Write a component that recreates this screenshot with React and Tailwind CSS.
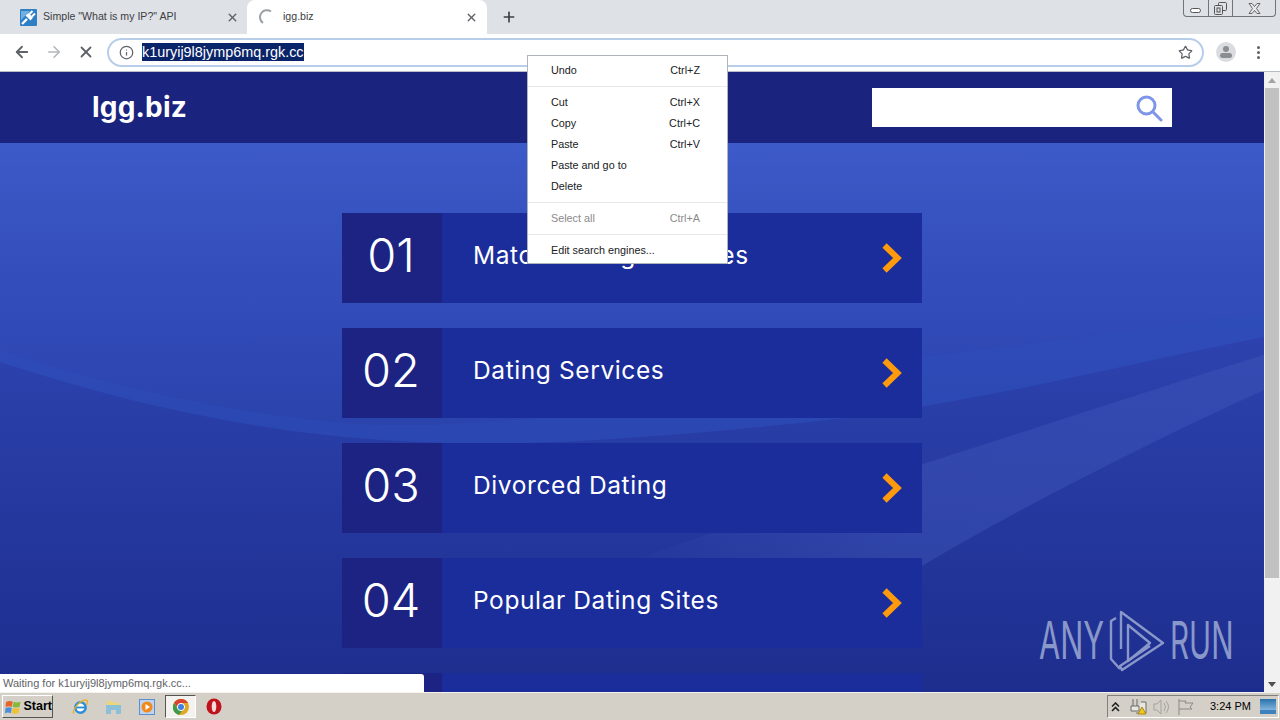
import { ArrowLeft, ArrowRight, X, Plus, Info, Star } from "lucide-react";

const ui = "font-['Liberation_Sans',Arial,sans-serif]";
const rows = [
  ["01", "Matchmaking Services"],
  ["02", "Dating Services"],
  ["03", "Divorced Dating"],
  ["04", "Popular Dating Sites"],
  ["", ""],
];
const menu = [
  [["Undo", "Ctrl+Z"]],
  [["Cut", "Ctrl+X"], ["Copy", "Ctrl+C"], ["Paste", "Ctrl+V"], ["Paste and go to", ""], ["Delete", ""]],
  [["Select all", "Ctrl+A", true]],
  [["Edit search engines...", ""]],
];

function Favicon() {
  return (
    <svg width="17" height="17" viewBox="0 0 17 17" className="shrink-0">
      <rect width="17" height="17" rx="1" fill="#2f7fc4" />
      <path d="M1 2 H10 L1 11 Z" fill="#6fb0e4" />
      <path d="M2 15 L7 10" stroke="#fff" strokeWidth="2.4" />
      <path d="M5.5 6.5 L10.5 11.5 L13 8.5 L8.5 4 Z" fill="#fff" />
      <path d="M9.5 5 L12.5 2 M12 7.5 L15 4.5" stroke="#fff" strokeWidth="2" />
    </svg>
  );
}

function Tab({ active, icon, title }) {
  return (
    <div className={`relative flex h-[34px] items-center ${active ? "w-[240px] rounded-t-lg bg-white" : "w-[247px]"}`}>
      <div className={`flex items-center ${active ? "ml-[11px] gap-[9px]" : "ml-[20px] gap-[6px]"}`}>
        {icon}
        <span className={`${ui} text-[10.6px] text-[#3c4043]`}>{title}</span>
      </div>
      <X size={13} strokeWidth={2.6} className={`absolute top-[11px] text-[#5f6368] ${active ? "right-[9px]" : "right-[8px]"}`} />
    </div>
  );
}

function Spinner() {
  return (
    <svg width="16" height="16" viewBox="0 0 16 16" className="shrink-0">
      <path d="M13 2.5 A7 7 0 0 0 5 14" fill="none" stroke="#9aa0a6" strokeWidth="2" />
    </svg>
  );
}

function Row({ num, title }) {
  return (
    <div className="flex h-[90px] w-[580px] shrink-0 bg-[#1b2d9b]">
      <div className="flex w-[100px] shrink-0 items-center justify-center bg-[#1c2383] pb-[8px] pr-[2px] text-[47px] font-light leading-none text-white">
        {num}
      </div>
      <div className="flex flex-1 items-center justify-between pl-[31px] pr-[19px]">
        <span className="pb-[5px] text-[24.5px] leading-none tracking-[0.6px] text-white">{title}</span>
        {title && (
          <svg width="22" height="30" viewBox="0 0 22 30" className="mt-[-1px]">
            <path d="M3.5 2.5 L16.5 15 L3.5 27.5" fill="none" stroke="#ff9a0d" strokeWidth="6" />
          </svg>
        )}
      </div>
    </div>
  );
}

function TaskIcon({ children, className = "" }) {
  return <div className={`flex h-[23px] items-center justify-center ${className}`}>{children}</div>;
}

export default function App() {
  return (
    <div className="relative flex h-[720px] w-[1280px] flex-col overflow-hidden bg-white">
      {/* tab strip */}
      <div className="relative flex h-[34px] shrink-0 items-start bg-[#dee1e6]">
        <Tab icon={<Favicon />} title={'Simple "What is my IP?" API'} />
        <Tab active icon={<Spinner />} title="igg.biz" />
        <Plus size={16} strokeWidth={2.5} className="ml-[14px] mt-[9px] text-[#3c4043]" />
        <div className="absolute right-[4px] top-0 flex h-[17px] w-[93px] rounded-b-[4px] border border-t-0 border-[#70757a] text-[#555]">
          <div className="flex flex-1 items-center justify-center border-r border-[#70757a]">
            <div className="mt-[5px] h-[5px] w-[11px] rounded-sm border border-[#555] bg-white" />
          </div>
          <div className="flex flex-1 items-center justify-center border-r border-[#70757a]">
            <svg width="13" height="13" viewBox="0 0 13 13" fill="none" stroke="#555">
              <rect x="4.5" y="0.5" width="8" height="8" rx="1" />
              <rect x="0.5" y="3.5" width="8" height="9" rx="1" fill="#dee1e6" />
              <rect x="3" y="6" width="3" height="4" />
            </svg>
          </div>
          <div className="flex w-[42px] items-center justify-center">
            <svg width="13" height="11" viewBox="0 0 13 11" fill="#e6e8ec" stroke="#666">
              <path d="M1 0.5 H4 L6.5 3.5 L9 0.5 H12 L8.5 5.5 L12 10.5 H9 L6.5 7.5 L4 10.5 H1 L4.5 5.5 Z" />
            </svg>
          </div>
        </div>
      </div>

      {/* toolbar */}
      <div className="flex h-[38px] shrink-0 items-center border-b border-[#b8bcc4] bg-white pb-[1px]">
        <ArrowLeft size={18} strokeWidth={2.4} className="ml-[13px] text-[#5f6368]" />
        <ArrowRight size={18} strokeWidth={2.2} className="ml-[14px] text-[#b4b7bb]" />
        <X size={18} strokeWidth={2.4} className="ml-[14px] text-[#5f6368]" />
        <div className="ml-[12px] flex h-[29px] w-[1097px] items-center rounded-full border-2 border-[#b7cde9] pl-[10px] pr-[9px]">
          <Info size={15} strokeWidth={2} className="text-[#5f6368]" />
          <span className={`${ui} ml-[8px] bg-[#0a246a] text-[14.4px] leading-[18px] text-white`}>k1uryij9l8jymp6mq.rgk.cc</span>
          <Star size={15} strokeWidth={2} className="ml-auto text-[#5f6368]" />
        </div>
        <div className="ml-[12px] flex h-[20px] w-[20px] shrink-0 flex-col items-center justify-center overflow-hidden rounded-full bg-[#dadce0]">
          <div className="h-[6px] w-[6px] rounded-full bg-[#8a8d91]" />
          <div className="mt-[1px] h-[5px] w-[12px] rounded-full bg-[#8a8d91]" />
        </div>
        <div className="ml-[21px] flex flex-col gap-[2px]">
          <div className="h-[3px] w-[3px] rounded-full bg-[#5f6368]" />
          <div className="h-[3px] w-[3px] rounded-full bg-[#5f6368]" />
          <div className="h-[3px] w-[3px] rounded-full bg-[#5f6368]" />
        </div>
      </div>

      {/* viewport */}
      <div className="flex min-h-0 flex-1">
        <div className="relative flex min-w-0 flex-1 flex-col overflow-hidden bg-[linear-gradient(180deg,#3c5ac8_11%,#2f48b4_45%,#1c308e_100%)] font-['Inter',sans-serif]">
          {/* background swooshes */}
          <svg className="absolute inset-0 h-full w-full" viewBox="0 0 1264 620" preserveAspectRatio="none">
            <defs>
              <linearGradient id="wedge" x1="0" x2="1" y1="0" y2="0">
                <stop offset="0" stopColor="#3f55b8" stopOpacity="0" />
                <stop offset="0.45" stopColor="#3f55b8" stopOpacity="0.45" />
                <stop offset="1" stopColor="#3f55b8" stopOpacity="0.5" />
              </linearGradient>
            </defs>
            <path d="M0 290 C120 330 240 355 345 365 C450 375 550 372 640 365 C750 357 850 347 920 335 C1050 313 1160 285 1264 265 L1264 620 L0 620 Z" fill="#22268c" opacity="0.17" />
            <path d="M0 278 C120 318 240 342 345 351 C450 358 550 345 640 335 C750 320 850 295 920 285 C1050 270 1160 255 1264 241 L1264 265 C1160 285 1050 313 920 335 C850 347 750 357 640 365 C550 372 450 375 345 365 C240 355 120 330 0 290 Z" fill="#2c50bc" opacity="0.4" />
            <path d="M600 500 C700 465 810 425 920 393 C1040 355 1160 315 1264 283 L1264 318 C1150 370 1030 430 920 495 C820 530 720 540 600 500 Z" fill="url(#wedge)" />
          </svg>

          <header className="relative flex h-[71px] shrink-0 items-center justify-between bg-[#1a237e] pl-[92px] pr-[92px]">
            <span className="pb-[2px] text-[28px] font-bold leading-none tracking-[0.2px] text-white">lgg.biz</span>
            <div className="flex h-[39px] w-[300px] items-center justify-end bg-white pr-[9px]">
              <svg width="28" height="28" viewBox="0 0 28 28" fill="none" stroke="#7e95ea" strokeWidth="3">
                <circle cx="11.5" cy="11.5" r="8.5" />
                <path d="M18 18 L26 26" strokeLinecap="round" />
              </svg>
            </div>
          </header>

          <main className="relative flex flex-col items-start gap-[25px] pl-[342px] pt-[70px]">
            {rows.map(([num, title], i) => (
              <Row key={i} num={num} title={title} />
            ))}
          </main>

          {/* watermark */}
          <div className="absolute bottom-[15px] left-[1039px] flex h-[72px] items-center text-[#8a97c9]">
            <span className="w-[61px] origin-left scale-x-[0.59] text-[52px] font-normal leading-none">ANY</span>
            <svg width="80" height="72" viewBox="0 0 80 72" fill="none" stroke="currentColor" strokeWidth="2.4" strokeLinejoin="round">
              <path d="M16 13 L11 16 V54 L20 64" />
              <path d="M21 44 V7 L63 38 L22 65 L20 61 L50 41" />
              <path d="M28 20 L50 38 L28 56 Z" />
            </svg>
            <span className="ml-[-10px] w-[61px] origin-left scale-x-[0.57] text-[52px] font-normal leading-none">RUN</span>
          </div>

          {/* status bubble */}
          <div className={`${ui} absolute bottom-0 left-0 flex h-[18px] w-[424px] items-center rounded-tr-[3px] bg-white pl-[3px] text-[11px] text-[#5f6368]`}>
            Waiting for k1uryij9l8jymp6mq.rgk.cc...
          </div>
        </div>

        {/* scrollbar */}
        <div className="flex w-[16px] shrink-0 flex-col items-center bg-[#f1f1f1]">
          <div className="mt-[6px] h-0 w-0 border-x-[4px] border-b-[5px] border-x-transparent border-b-[#a3a3a3]" />
          <div className="mt-[5px] h-[490px] w-[14px] bg-[#c1c1c1]" />
          <div className="mt-auto mb-[5px] h-0 w-0 border-x-[4px] border-t-[5px] border-x-transparent border-t-[#505050]" />
        </div>
      </div>

      {/* taskbar */}
      <div className={`${ui} flex h-[28px] shrink-0 items-center border-t border-[#f4f2ec] bg-[#d4d0c8]`}>
        <div className="ml-[2px] flex h-[23px] w-[51px] items-center gap-[2px] border border-b-[#555] border-l-white border-r-[#555] border-t-white pl-[2px] text-[12.5px] font-bold text-black">
          <svg width="17" height="16" viewBox="0 0 17 16">
            <path d="M1 3 Q4 1 8 2.5 L7 8 Q4 6.5 0.5 8 Z" fill="#e8632a" />
            <path d="M9 2.5 Q12 4 16 2.5 L15 8 Q11 9 8 8 Z" fill="#86b83a" />
            <path d="M0.5 9 Q4 7.5 7 9 L6 14.5 Q3 13 0 14.5 Z" fill="#4a8ed8" />
            <path d="M8 9 Q11 10 15 9 L14 14.5 Q10 15.5 7 14.5 Z" fill="#f0c232" />
          </svg>
          Start
        </div>
        <TaskIcon className="ml-[19px] w-[17px]">
          <svg width="18" height="18" viewBox="0 0 18 18">
            <circle cx="9" cy="9.5" r="5.5" fill="#fff" stroke="#2f8ed8" strokeWidth="2.6" />
            <path d="M4 9.5 H14" stroke="#2f8ed8" strokeWidth="2" />
            <path d="M1.5 16 C1 11 8 2 15 1.5 C17 2 16.5 5 15 7" fill="none" stroke="#e8b020" strokeWidth="1.4" />
          </svg>
        </TaskIcon>
        <TaskIcon className="ml-[16px] w-[17px]">
          <svg width="17" height="16" viewBox="0 0 17 16">
            <path d="M2 2 H8 L9 4 H15 V8 H2 Z" fill="#ecd67a" />
            <path d="M1 6 H16 V15 H11 V11 H6 V15 H1 Z" fill="#8cc0d8" />
          </svg>
        </TaskIcon>
        <TaskIcon className="ml-[17px] w-[16px]">
          <svg width="16" height="16" viewBox="0 0 16 16">
            <rect x="0.5" y="0.5" width="15" height="15" fill="#bcd4f0" stroke="#5c8fd0" />
            <circle cx="8" cy="8" r="5.5" fill="#f08a1c" />
            <path d="M6.5 5 L11 8 L6.5 11 Z" fill="#fff" />
          </svg>
        </TaskIcon>
        <TaskIcon className="ml-[10px] w-[31px] border border-b-white border-l-[#555] border-r-white border-t-[#555] bg-[#f4f2ee]">
          <svg width="16" height="16" viewBox="0 0 16 16">
            <circle cx="8" cy="8" r="8" fill="#e0a820" />
            <path d="M8 0 A8 8 0 0 1 15 4 H8 Z" fill="#d8432f" />
            <path d="M1 4 A8 8 0 0 1 8 0 L8 4 L5 9 Z" fill="#d8432f" />
            <path d="M1 4 L5 10 L9 12 L6 16 A8 8 0 0 1 1 4 Z" fill="#3f9a4a" />
            <circle cx="8" cy="8" r="3.6" fill="#3f7fe0" stroke="#fff" />
          </svg>
        </TaskIcon>
        <TaskIcon className="ml-[10px] w-[16px]">
          <svg width="16" height="17" viewBox="0 0 16 17">
            <ellipse cx="8" cy="8.5" rx="7.5" ry="8" fill="#c0121c" />
            <ellipse cx="8" cy="8.5" rx="2.3" ry="5.5" fill="#f4dcdc" />
          </svg>
        </TaskIcon>

        <div className="ml-auto mr-[1px] flex h-[23px] w-[172px] items-center border border-b-white border-l-[#808080] border-r-white border-t-[#808080] text-[11px] text-black">
          <svg width="9" height="10" viewBox="0 0 9 10" fill="none" stroke="#222" strokeWidth="1.6" className="ml-[3px]">
            <path d="M1 4.5 L4.5 1 L8 4.5 M1 9 L4.5 5.5 L8 9" />
          </svg>
          <svg width="19" height="17" viewBox="0 0 19 17" className="ml-[9px]" fill="#e8e6e0" stroke="#6b6b6b">
            <path d="M4 1 V8 M8 1 V8 M2 8 H10 V13 H2 Z M12 4 H17 V15 H7" />
            <path d="M13 9 L17 16 H9 Z" fill="#f2c81e" stroke="#a88a10" />
          </svg>
          <svg width="18" height="16" viewBox="0 0 18 16" className="ml-[5px]" fill="none" stroke="#a5a39d">
            <path d="M1 5 H4 L8 1 V15 L4 11 H1 Z M11 4 Q14 8 11 12 M13 2 Q18 8 13 14" />
          </svg>
          <svg width="18" height="16" viewBox="0 0 18 16" className="ml-[6px]" fill="none" stroke="#8c8a84">
            <path d="M2 0 V16 M2 2 H9 L8 4 H16 L13 8 L15 10 H2" />
          </svg>
          <span className="ml-[15px]">3:24 PM</span>
          <div className="ml-auto mr-[2px] h-[15px] w-[16px] border-b-[4px] border-[#3d82bd] bg-[linear-gradient(#2a72ac,#82b4dc)]" />
        </div>
      </div>

      {/* context menu */}
      <div className={`${ui} absolute left-[527px] top-[55px] w-[201px] border border-[#b0b4bc] bg-white pb-[2px] pt-[4px] text-[10.8px] text-[#202124]`}>
        {menu.map((group, i) => (
          <div key={i} className={i > 0 ? "mt-[5px] border-t border-[#e8e8e8] pt-[5px]" : ""}>
            {group.map(([label, keys, off]) => (
              <div key={label} className={`flex h-[21px] items-center justify-between pl-[23px] pr-[27px] ${off ? "text-[#8a8a8a]" : ""}`}>
                <span>{label}</span>
                <span>{keys}</span>
              </div>
            ))}
          </div>
        ))}
      </div>
    </div>
  );
}
